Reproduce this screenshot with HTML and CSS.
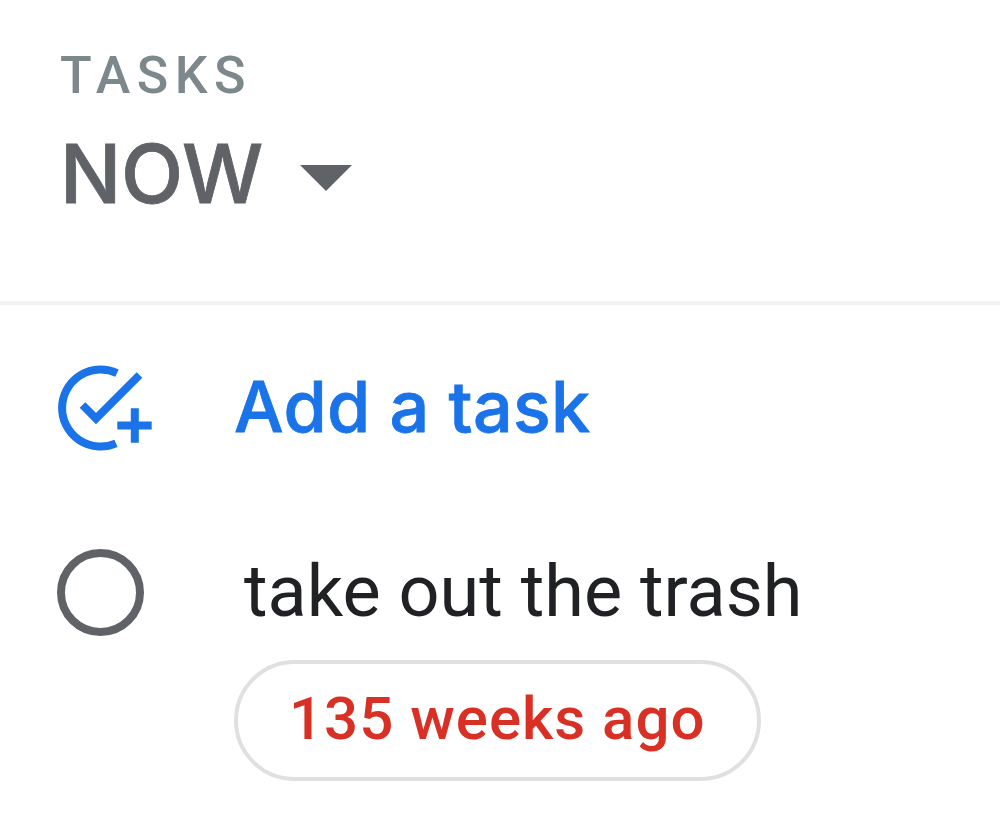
FILE: index.html
```html
<!DOCTYPE html>
<html lang="en">
  <head>
    <title>Tasks</title>
    <meta charset="utf-8">
    <link rel="stylesheet" href="styles.css">
  </head>
  <body>

  <header class="header">
    <div class="label"><span>TASKS</span></div>
    <div class="list-picker">
      <span class="list-name">NOW</span>
      <svg class="arrow" viewBox="0 0 52 26"><path d="M0 0h52L26 26z"/></svg>
    </div>
  </header>

  <main>
    <div class="add-task">
      <svg class="add-icon" viewBox="0 0 100 90" fill="none" stroke="#1a73e8" stroke-width="8">
        <path d="M61 9.200A38.500 38.500 0 1 0 60 79.300"/>
        <path d="M26.500 41L40 54.500L83.500 11"/>
        <path d="M78.800 44.300v34.400M61.300 61.500h34.400"/>
      </svg>
      <span class="add-text">Add a task</span>
    </div>

    <div class="task">
      <span class="check"></span>
      <div class="task-body">
        <div class="task-title"><span>take out the trash</span></div>
        <div class="due"><span>135 weeks ago</span></div>
      </div>
    </div>
  </main>

  </body>
</html>
```

FILE: styles.css
```css
body {
  margin: 0;
  height: 831px;
  background: #fff;
  font-family: Roboto, "Liberation Sans", sans-serif;
  overflow: hidden;
}

.header {
  box-sizing: border-box;
  height: 305px;
  padding: 46px 0 0 60px;
  border-bottom: 4px solid #eff3f3;
}

.label {
  height: 60px;
  line-height: 60px;
  font-size: 52px;
  font-weight: 500;
  letter-spacing: 6.5px;
  color: #7d888c;
}

.list-picker {
  display: flex;
  align-items: center;
  height: 140px;
  margin-top: -2px;
}

.list-name {
  font-family: Inter, Roboto, sans-serif;
  font-size: 81px;
  font-weight: 500;
  letter-spacing: -0.3px;
  -webkit-text-stroke: 0.8px #5f6368;
  color: #5f6368;
}

.arrow {
  width: 52px;
  height: 26px;
  margin: 7px 0 0 37px;
  fill: #5f6368;
}

.add-task {
  display: flex;
  align-items: center;
  height: 90px;
  padding: 59px 0 0 56px;
}

.add-icon {
  width: 100px;
  height: 90px;
}

.add-text {
  margin-left: 78px;
  font-family: Inter, Roboto, sans-serif;
  font-size: 70px;
  font-weight: 500;
  letter-spacing: 0.3px;
  -webkit-text-stroke: 0.8px #1a73e8;
  line-height: 90px;
  padding-bottom: 5px;
  color: #1a73e8;
}

.task {
  display: flex;
  padding: 95px 0 0 57px;
}

.check {
  box-sizing: border-box;
  width: 87px;
  height: 87px;
  border: 8px solid #5f6368;
  border-radius: 50%;
}

.task-body {
  margin-left: 90px;
}

.task-title {
  height: 111px;
  padding-left: 10px;
  font-size: 72px;
  line-height: 86px;
  color: #202124;
}

.due {
  box-sizing: border-box;
  width: 527px;
  height: 121px;
  padding-left: 51px;
  border: 4px solid #e0e0e0;
  border-radius: 61px;
  font-size: 60px;
  font-weight: 500;
  line-height: 109px;
  letter-spacing: 1px;
  color: #d93025;
}
```
